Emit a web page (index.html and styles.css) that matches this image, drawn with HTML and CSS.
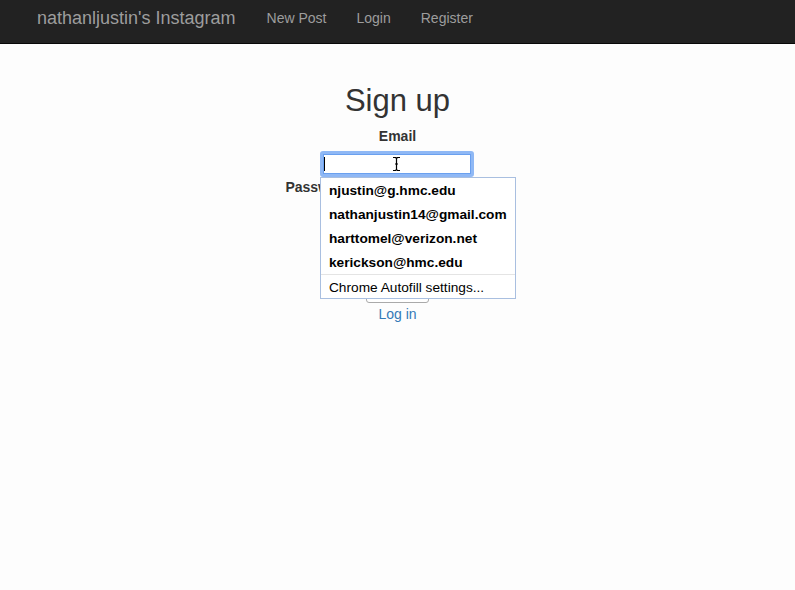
FILE: index.html
```html
<!DOCTYPE html>
<html>
<head>
<meta charset="utf-8">
<link rel="stylesheet" href="styles.css">
</head>
<body>
<nav class="navbar">
  <a class="brand" href="#">nathanljustin's Instagram</a>
  <a class="nav-link" href="#">New Post</a>
  <a class="nav-link" href="#">Login</a>
  <a class="nav-link" href="#">Register</a>
</nav>
<main class="page">
  <h1 class="title">Sign up</h1>
  <form class="form">
    <label class="label label-block">Email</label>
    <div class="field-wrap">
      <div class="input focused"><span class="caret"></span></div>
      <svg class="ibeam" width="9" height="14" viewBox="0 0 9 14"><path d="M1 0.5 H3.5 L4.5 1.5 L5.5 0.5 H8 M4.5 1.5 V12.5 M1 13.5 H3.5 L4.5 12.5 L5.5 13.5 H8 M3 7 H6" stroke="#000" stroke-width="1.2" fill="none"/></svg>
      <ul class="autofill">
        <li class="item">njustin@g.hmc.edu</li>
        <li class="item">nathanjustin14@gmail.com</li>
        <li class="item">harttomel@verizon.net</li>
        <li class="item">kerickson@hmc.edu</li>
        <li class="settings">Chrome Autofill settings...</li>
      </ul>
    </div>
    <div class="row">
      <label class="label">Password</label>
      <div class="input pw"></div>
    </div>
    <div class="spacer"></div>
    <button class="btn" type="button">Sign up</button>
  </form>
  <a class="login" href="#">Log in</a>
</main>
</body>
</html>
```
FILE: styles.css
```css
* { box-sizing: border-box; }
body {
  margin: 0;
  background: #fdfdfd;
  font-family: "Liberation Sans", Arial, sans-serif;
  color: #333;
}
.navbar {
  height: 44px;
  background: #222;
  border-bottom: 1px solid #080808;
  display: flex;
  align-items: flex-start;
  padding-left: 37px;
}
.brand {
  color: #9d9d9d;
  font-size: 18px;
  line-height: 36px;
  text-decoration: none;
  margin-right: 31px;
}
.nav-link {
  color: #9d9d9d;
  font-size: 14px;
  line-height: 36px;
  text-decoration: none;
  margin-right: 30px;
}
.page {
  display: flex;
  flex-direction: column;
  align-items: center;
  padding-top: 40px;
}
.title {
  margin: 0;
  font-size: 31px;
  font-weight: 500;
  line-height: 34px;
  color: #333;
}
.form {
  display: flex;
  flex-direction: column;
  align-items: center;
  margin-top: 8px;
}
.label {
  font-size: 14px;
  font-weight: bold;
  line-height: 20px;
}
.label-block { margin-bottom: 5px; }
.field-wrap { position: relative; margin-left: -1px; }
.input {
  width: 154px;
  height: 26px;
  border: 1px solid #aaa;
  background: #fff;
}
.input.focused {
  border: 3px solid #8fb8f5;
  border-radius: 3px;
  box-shadow: inset 0 0 0 1px #6aa0ef;
  position: relative;
}
.caret {
  position: absolute;
  left: 1px;
  top: 3px;
  width: 1px;
  height: 14px;
  background: #000;
}
.ibeam {
  position: absolute;
  left: 72px;
  top: 6px;
}
.row {
  display: flex;
  align-items: center;
  gap: 4px;
  height: 24px;
  margin-top: -2px;
}
.input.pw {
  align-self: flex-start;
  margin-top: 4px;
}
.spacer { height: 70px; }
.btn {
  width: 63px;
  height: 34px;
  background: #fff;
  border: 1px solid #aaa;
  border-radius: 3px;
  font-family: inherit;
  font-size: 14px;
  color: #333;
}
.login {
  color: #337ab7;
  font-size: 14px;
  line-height: 20px;
  margin-top: 1px;
  text-decoration: none;
}
.autofill {
  position: absolute;
  left: 0;
  top: 26px;
  width: 196px;
  margin: 0;
  padding: 0;
  list-style: none;
  background: #fff;
  border: 1px solid #a9bfe0;
  z-index: 5;
}
.item, .settings {
  height: 24px;
  line-height: 26px;
  padding-left: 8px;
  font-size: 13.7px;
  color: #000;
  white-space: nowrap;
}
.item { font-weight: bold; }
.settings {
  border-top: 1px solid #e4e4e4;
  font-weight: normal;
  line-height: 25px;
}
```
